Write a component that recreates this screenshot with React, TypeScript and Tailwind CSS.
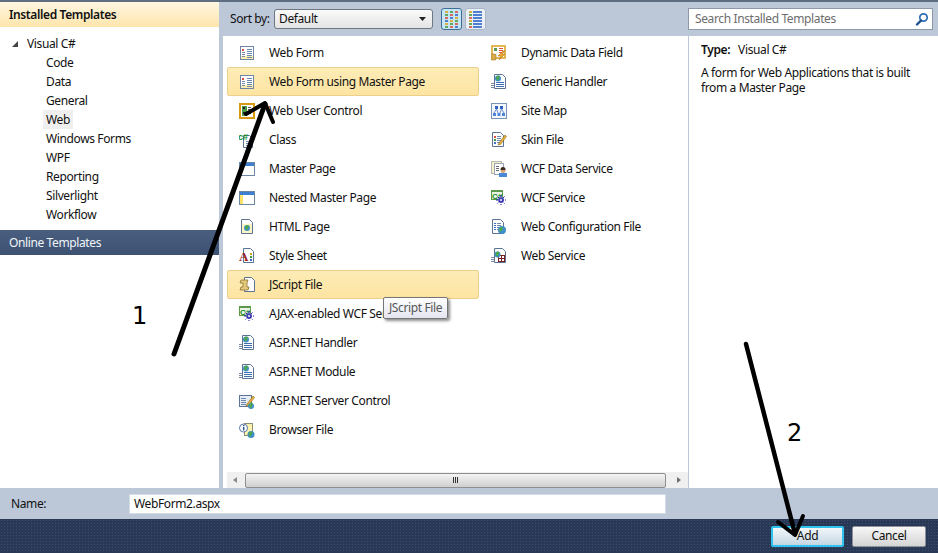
import type { ReactNode } from 'react';

const Svg = ({ children }: { children: ReactNode }) => (
  <svg width="16" height="16" viewBox="0 0 16 16" className="shrink-0">{children}</svg>
);

const Lines = ({ x, y, w, n, c = '#6b87ad', step = 2 }: { x: number; y: number; w: number; n: number; c?: string; step?: number }) => (
  <>
    {Array.from({ length: n }, (_, i) => (
      <rect key={i} x={x} y={y + i * step} width={w} height="1" fill={c} />
    ))}
  </>
);

const Page = ({ x = 3, y = 1, w = 10, h = 14 }: { x?: number; y?: number; w?: number; h?: number }) => (
  <path
    d={`M${x + 0.5} ${y + 0.5}h${w - 4}l3 3v${h - 4}h-${w - 1}z`}
    fill="#fdfdfd"
    stroke="#5d7393"
  />
);

const Globe = ({ x = 11, y = 12, r = 3.5 }: { x?: number; y?: number; r?: number }) => (
  <>
    <circle cx={x} cy={y} r={r} fill="#3f8fc9" />
    <path d={`M${x - r + 1} ${y - 1}q2 -3 4 -1.5q-1 3 -2 4.5q-2 -.5 -2 -3z`} fill="#4da84a" />
  </>
);

const Gears = () => (
  <>
    <circle cx="10" cy="10" r="3" fill="#6a63c4" />
    <path d="M10 5v10M5 10h10M6.500 6.500l7 7M13.500 6.500l-7 7" stroke="#1f1fa8" strokeWidth="1" strokeDasharray="2 1" />
    <circle cx="10" cy="10" r="1" fill="#fff" />
  </>
);

const Pencil = () => <path d="M8 11l6 -8 1.500 1.500 -6 8 -2.500 .5z" fill="#e8b23c" stroke="#8a6a1d" strokeWidth=".6" />;

const FormIcon = () => (
  <Svg>
    <rect x="1.500" y="1.500" width="13" height="13" fill="#fff" stroke="#6f86a6" />
    <rect x="2" y="11" width="12" height="3" fill="#fbeeb0" />
    <rect x="3" y="4" width="2" height="2" fill="#d9523e" />
    <Lines x={3} y={7} w={3} n={3} c="#7a8aa0" />
    <Lines x={8} y={4} w={5} n={5} />
  </Svg>
);

const icons: Record<string, ReactNode> = {
  form: <FormIcon />,
  control: (
    <Svg>
      <rect x="1" y="1" width="14" height="14" fill="#fff" stroke="#d99a12" strokeWidth="2" />
      <rect x="3" y="3" width="5" height="10" fill="#4f9a44" />
      <rect x="4" y="4" width="2" height="2" fill="#223" />
      <rect x="4" y="9" width="2" height="2" fill="#223" />
      <Lines x={9} y={4} w={3} n={4} c="#555" />
    </Svg>
  ),
  cls: (
    <Svg>
      <Page x={4} y={3} w={10} h={13} />
      <Lines x={7} y={9} w={5} n={3} />
      <text x="-1" y="8" fontSize="9" fontWeight="700" letterSpacing="0" fill="#0d8a17" fontFamily="Liberation Sans">c#</text>
    </Svg>
  ),
  master: (
    <Svg>
      <rect x="0.500" y="1.500" width="15" height="13" fill="#fff" stroke="#6d86a8" />
      <rect x="1" y="2" width="14" height="3" fill="#3f7fcf" />
    </Svg>
  ),
  nested: (
    <Svg>
      <rect x="0.500" y="1.500" width="15" height="13" fill="#fff" stroke="#6d86a8" />
      <rect x="1" y="2" width="14" height="3" fill="#3f7fcf" />
      <rect x="1" y="5" width="3" height="9" fill="#fbe36a" />
    </Svg>
  ),
  html: (
    <Svg>
      <Page x={2} y={0} w={12} h={15} />
      <rect x="3" y="5" width="10" height="9" fill="#fdf6c4" />
      <Globe x={8} y={9} r={3} />
    </Svg>
  ),
  css: (
    <Svg>
      <Page x={4} y={0} w={11} h={15} />
      <text x="0" y="13" fontSize="13" fontWeight="700" letterSpacing="0" fill="#9c1c1c" fontFamily="Liberation Serif">A</text>
      <rect x="11" y="5" width="2" height="2" fill="#d9a21e" />
      <rect x="11" y="8" width="2" height="2" fill="#3f9a3f" />
      <rect x="11" y="11" width="2" height="2" fill="#3f6fca" />
    </Svg>
  ),
  js: (
    <Svg>
      <Page x={5} y={0} w={11} h={15} />
      <path d="M2 3h7l-1 3v4h2l-1 3H1l1 -3h2V6H1z" fill="#e3c77a" stroke="#8d7432" strokeWidth=".8" />
    </Svg>
  ),
  wcf: (
    <Svg>
      <rect x="0.500" y="0.500" width="11" height="9" fill="#eaf3e4" stroke="#5b9a4d" />
      <rect x="0" y="0" width="12" height="2" fill="#5b9a4d" />
      <text x="1" y="9" fontSize="8" fontWeight="700" letterSpacing="0" fill="#0d8a17" fontFamily="Liberation Sans">C#</text>
      <Gears />
    </Svg>
  ),
  handler: (
    <Svg>
      <Page x={3} y={0} w={12} h={15} />
      <Lines x={5} y={8} w={8} n={3} c="#3f6fb5" />
      <Lines x={0} y={9} w={3} n={3} c="#7a8aa0" />
      <Globe x={7} y={4.500} r={3} />
    </Svg>
  ),
  server: (
    <Svg>
      <rect x="0.500" y="2.500" width="12" height="11" fill="#e6edf6" stroke="#5d7393" />
      <Lines x={2} y={5} w={5} n={4} />
      <Pencil />
      <Globe x={12} y={13} r={3} />
    </Svg>
  ),
  browser: (
    <Svg>
      <rect x="5.500" y="1.500" width="8" height="12" fill="#fdf3ae" stroke="#8a8f75" />
      <circle cx="4.500" cy="6" r="4" fill="#fff" stroke="#5a78a6" />
      <rect x="4" y="5" width="1.400" height="3.400" fill="#2d4f8f" />
      <rect x="4" y="3" width="1.400" height="1.200" fill="#2d4f8f" />
      <Globe x={12} y={12.500} r={3.500} />
    </Svg>
  ),
  data: (
    <Svg>
      <rect x="1" y="1" width="13" height="12" fill="#fff" stroke="#d9a21e" strokeWidth="1.500" />
      <rect x="3" y="3" width="3" height="3" fill="#5f9a55" />
      <Lines x={8} y={3} w={4} n={3} c="#d9523e" />
      <rect x="0" y="9" width="5" height="6" rx="1" fill="#d9aa4a" stroke="#a37a22" strokeWidth=".6" />
      <path d="M12 6l-5 5h3l-2 4 6 -6h-3l3 -3z" fill="#f0a92a" stroke="#a3681c" strokeWidth=".5" />
    </Svg>
  ),
  sitemap: (
    <Svg>
      <rect x="0.500" y="0.500" width="15" height="15" fill="#f3f7fc" stroke="#7a92b5" />
      <rect x="4" y="3" width="3" height="3" fill="#2f62c2" />
      <rect x="9" y="3" width="3" height="3" fill="#2f62c2" />
      <path d="M5.500 6L3 10M5.500 6L7 10M10.500 6L9 10M10.500 6L13 10" stroke="#6c8fc7" />
      <rect x="2" y="10" width="3" height="3" fill="#4f86d9" />
      <rect x="6.500" y="10" width="3" height="3" fill="#4f86d9" />
      <rect x="11" y="10" width="3" height="3" fill="#4f86d9" />
    </Svg>
  ),
  skin: (
    <Svg>
      <Page x={1} y={0} w={12} h={15} />
      <rect x="3" y="4" width="2" height="2" fill="#d9523e" />
      <rect x="3" y="7" width="2" height="2" fill="#3f9a3f" />
      <rect x="3" y="10" width="2" height="2" fill="#3f6fca" />
      <Lines x={6} y={4} w={4} n={4} />
      <Pencil />
    </Svg>
  ),
  dataservice: (
    <Svg>
      <rect x="0.500" y="0.500" width="10" height="12" fill="#f7efc8" stroke="#b8b8b0" />
      <rect x="3.500" y="2.500" width="9" height="11" fill="#fff" stroke="#9aa6b8" />
      <Lines x={5} y={5} w={3} n={3} c="#667" />
      <rect x="8" y="12" width="8" height="4" fill="#4a87d6" />
      <circle cx="12" cy="9.500" r="2.500" fill="#d6a57c" />
      <path d="M9.500 9q0 -3 2.500 -3t2.500 3z" fill="#3a2a1c" />
    </Svg>
  ),
  config: (
    <Svg>
      <Page x={1} y={0} w={12} h={15} />
      <Lines x={3} y={4} w={2} n={4} c="#3f6fca" />
      <Lines x={6} y={4} w={4} n={4} />
      <Globe x={11} y={11} r={4} />
    </Svg>
  ),
  webservice: (
    <Svg>
      <Page x={3} y={0} w={12} h={15} />
      <Lines x={0} y={9} w={3} n={3} c="#7a8aa0" />
      <rect x="7.500" y="7.500" width="6" height="6" fill="#fff" stroke="#7a1f1f" />
      <path d="M10.500 8v5M8 10.500h5" stroke="#7a1f1f" />
      <Globe x={6.500} y={6.500} r={3} />
    </Svg>
  ),
};

const leftTemplates = [
  { name: 'Web Form', icon: 'form' },
  { name: 'Web Form using Master Page', icon: 'form', hl: true },
  { name: 'Web User Control', icon: 'control' },
  { name: 'Class', icon: 'cls' },
  { name: 'Master Page', icon: 'master' },
  { name: 'Nested Master Page', icon: 'nested' },
  { name: 'HTML Page', icon: 'html' },
  { name: 'Style Sheet', icon: 'css' },
  { name: 'JScript File', icon: 'js', hl: true },
  { name: 'AJAX-enabled WCF Service', icon: 'wcf' },
  { name: 'ASP.NET Handler', icon: 'handler' },
  { name: 'ASP.NET Module', icon: 'handler' },
  { name: 'ASP.NET Server Control', icon: 'server' },
  { name: 'Browser File', icon: 'browser' },
];

const rightTemplates = [
  { name: 'Dynamic Data Field', icon: 'data' },
  { name: 'Generic Handler', icon: 'handler' },
  { name: 'Site Map', icon: 'sitemap' },
  { name: 'Skin File', icon: 'skin' },
  { name: 'WCF Data Service', icon: 'dataservice' },
  { name: 'WCF Service', icon: 'wcf' },
  { name: 'Web Configuration File', icon: 'config' },
  { name: 'Web Service', icon: 'webservice' },
];

const treeItems = ['Code', 'Data', 'General', 'Web', 'Windows Forms', 'WPF', 'Reporting', 'Silverlight', 'Workflow'];

function TemplateRow({ name, icon, hl }: { name: string; icon: string; hl?: boolean }) {
  return (
    <div
      className={`flex h-[29px] items-center gap-[14px] whitespace-nowrap rounded-[2px] border pl-[11px] ${
        hl ? 'border-[#eccf8a] bg-gradient-to-b from-[#fdecb6] to-[#fde4a2]' : 'border-transparent'
      }`}
    >
      {icons[icon]}
      <span>{name}</span>
    </div>
  );
}

function ViewIcon({ active }: { active?: boolean }) {
  const colors = ['#d9b23e', '#5fa85f', '#d96a5e', '#4f7fd0'];
  return (
    <div
      className={`flex h-[22px] w-[21px] flex-col justify-center gap-[1px] rounded-[3px] border px-[3px] ${
        active ? 'border-[#3d6f94] bg-[#c6e6f8]' : 'border-[#aab6c6] bg-[#eaf0f6]'
      }`}
    >
      {[0, 1, 2, 3, 4, 5].map(i => (
        <div key={i} className={active ? 'flex justify-between' : 'flex gap-[1px]'}>
          {active ? (
            [0, 1, 2].map(j => (
              <div key={j} className="h-[2px] w-[3px]" style={{ backgroundColor: colors[(j + i) % 4] }} />
            ))
          ) : (
            <>
              <div className="h-[2px] w-[3px]" style={{ backgroundColor: colors[i % 3] }} />
              <div className="h-[2px] flex-1 bg-[#4f7fd0]" />
            </>
          )}
        </div>
      ))}
    </div>
  );
}

export default function App() {
  return (
    <div className="relative flex h-[553px] w-[938px] flex-col overflow-hidden bg-[#bcc7d8] font-['Noto_Sans','Liberation_Sans',sans-serif] text-[12px] leading-[16px] tracking-[-0.38px] text-[#111]">
      <div className="h-[2px] shrink-0 bg-[#5f6d80]" />

      <div className="flex min-h-0 flex-1">
        {/* Left tree */}
        <div className="flex w-[219px] shrink-0 flex-col bg-white">
          <div className="flex h-[25px] shrink-0 items-center bg-gradient-to-b from-[#fff7e2] to-[#fde5ab] pl-[9px] font-semibold">
            Installed Templates
          </div>
          <div className="flex h-[203px] shrink-0 flex-col pt-[7px]">
            <div className="flex h-[19px] items-center gap-[9px] pl-[12px]">
              <svg width="6" height="6" viewBox="0 0 6 6">
                <path d="M6 0v6H0z" fill="#454545" />
              </svg>
              <span>Visual C#</span>
            </div>
            {treeItems.map(item => (
              <div key={item} className="flex h-[19px] items-center pl-[43px]">
                <span className={`px-[3px] leading-[19px] ${item === 'Web' ? 'bg-[#efefef]' : ''}`}>{item}</span>
              </div>
            ))}
          </div>
          <div className="flex h-[25px] shrink-0 items-center bg-gradient-to-b from-[#4a5f80] to-[#3d5272] pl-[9px] text-[#f2f5f9]">
            Online Templates
          </div>
        </div>

        {/* Center and details */}
        <div className="ml-[4px] flex min-w-0 flex-1 flex-col">
          <div className="flex h-[34px] shrink-0 items-center">
            <span className="ml-[7px] w-[44px]">Sort by:</span>
            <div className="flex h-[20px] w-[159px] items-center justify-between rounded-[3px] border border-[#6f7780] bg-gradient-to-b from-[#fafafa] to-[#e4e4e4] px-[4px]">
              <span>Default</span>
              <svg width="8" height="4" viewBox="0 0 8 4" className="mr-[1px]">
                <path d="M0 0h7L3.500 4z" fill="#222" />
              </svg>
            </div>
            <div className="ml-[8px] flex gap-[3px]">
              <ViewIcon active />
              <ViewIcon />
            </div>
            <div className="ml-[202px] flex h-[22px] w-[245px] items-center justify-between border border-[#8d99a8] bg-white pl-[6px] pr-[3px] text-[#6d6d6d]">
              <span>Search Installed Templates</span>
              <svg width="14" height="14" viewBox="0 0 14 14">
                <circle cx="8.500" cy="5.500" r="3.700" fill="none" stroke="#2f6fb5" strokeWidth="1.800" />
                <path d="M6 8.500L2 12.500" stroke="#1d4f8f" strokeWidth="2.400" strokeLinecap="round" />
              </svg>
            </div>
          </div>

          <div className="flex min-h-0 flex-1 bg-white">
            <div className="flex w-[466px] shrink-0 flex-col border-r border-[#bcc7d8]">
              <div className="flex min-h-0 flex-1 pl-[4px] pt-[2px]">
                <div className="w-[252px] shrink-0">
                  {leftTemplates.map(t => (
                    <TemplateRow key={t.name} {...t} />
                  ))}
                </div>
                <div className="flex-1">
                  {rightTemplates.map(t => (
                    <TemplateRow key={t.name} {...t} />
                  ))}
                </div>
              </div>
              <div className="ml-[4px] flex h-[16px] shrink-0 items-center bg-[#f0f0f0]">
                <svg width="18" height="16" viewBox="0 0 18 16">
                  <path d="M10 5v6L6 8z" fill="#8a8a8a" />
                </svg>
                <div className="flex h-[15px] w-[421px] items-center justify-center rounded-[2px] border border-[#8e8f8f] bg-gradient-to-b from-[#f4f4f4] to-[#cfcfcf]">
                  <div className="flex gap-[1px]">
                    <div className="h-[6px] w-[1px] bg-[#333]" />
                    <div className="h-[6px] w-[1px] bg-[#333]" />
                    <div className="h-[6px] w-[1px] bg-[#333]" />
                  </div>
                </div>
                <svg width="22" height="16" viewBox="0 0 22 16">
                  <path d="M11 5v6L15 8z" fill="#6f6f6f" />
                </svg>
              </div>
            </div>
            <div className="flex-1 pl-[12px] pt-[6px]">
              <div className="flex h-[16px] gap-[8px]">
                <span className="font-semibold">Type:</span>
                <span>Visual C#</span>
              </div>
              <p className="mt-[7px] w-[225px] leading-[15px]">A form for Web Applications that is built from a Master Page</p>
            </div>
          </div>
        </div>
      </div>

      {/* Name bar */}
      <div className="flex h-[31px] shrink-0 items-center pl-[11px]">
        <span className="w-[118px]">Name:</span>
        <div className="flex h-[20px] w-[537px] items-center border border-[#d5dce6] bg-white pl-[4px]">WebForm2.aspx</div>
      </div>

      {/* Footer */}
      <div className="flex h-[34px] shrink-0 items-center justify-end gap-[8px] bg-[#293955] bg-[radial-gradient(#3b4e70_0.8px,transparent_0.8px)] bg-[length:3px_3px] pr-[12px]">
        <div className="flex h-[21px] w-[73px] items-center justify-center rounded-[2px] border-2 border-[#2fc4ee] bg-gradient-to-b from-[#f2f7fa] to-[#c5d7e3]">Add</div>
        <div className="flex h-[21px] w-[74px] items-center justify-center rounded-[2px] border border-[#8d929a] bg-gradient-to-b from-[#f7f7f7] to-[#d4d4d4]">Cancel</div>
      </div>

      {/* Tooltip */}
      <div className="absolute left-[383px] top-[297px] flex h-[22px] w-[65px] items-center justify-center rounded-[2px] border border-[#767676] bg-gradient-to-b from-white to-[#e4e5f0] text-[#575757] shadow-[2px_2px_3px_rgba(0,0,0,0.45)]">
        JScript File
      </div>

      {/* Hand-drawn annotations */}
      <svg className="pointer-events-none absolute left-0 top-0" width="938" height="553" viewBox="0 0 938 553">
        <g fill="none" stroke="#000" strokeLinecap="round" strokeLinejoin="round">
          <path d="M174 354L265 104" strokeWidth="5" />
          <path d="M246 114L265 103L273 122" strokeWidth="4" />
          <path d="M746 344L795 534" strokeWidth="4.500" />
          <path d="M778 522L795 535L803 516" strokeWidth="4" />
        </g>
      </svg>
      <span className="absolute left-[132px] top-[302px] font-['DejaVu_Sans',sans-serif] text-[24px] leading-[28px] tracking-normal text-black">1</span>
      <span className="absolute left-[787px] top-[419px] font-['DejaVu_Sans',sans-serif] text-[24px] leading-[28px] tracking-normal text-black">2</span>
    </div>
  );
}
